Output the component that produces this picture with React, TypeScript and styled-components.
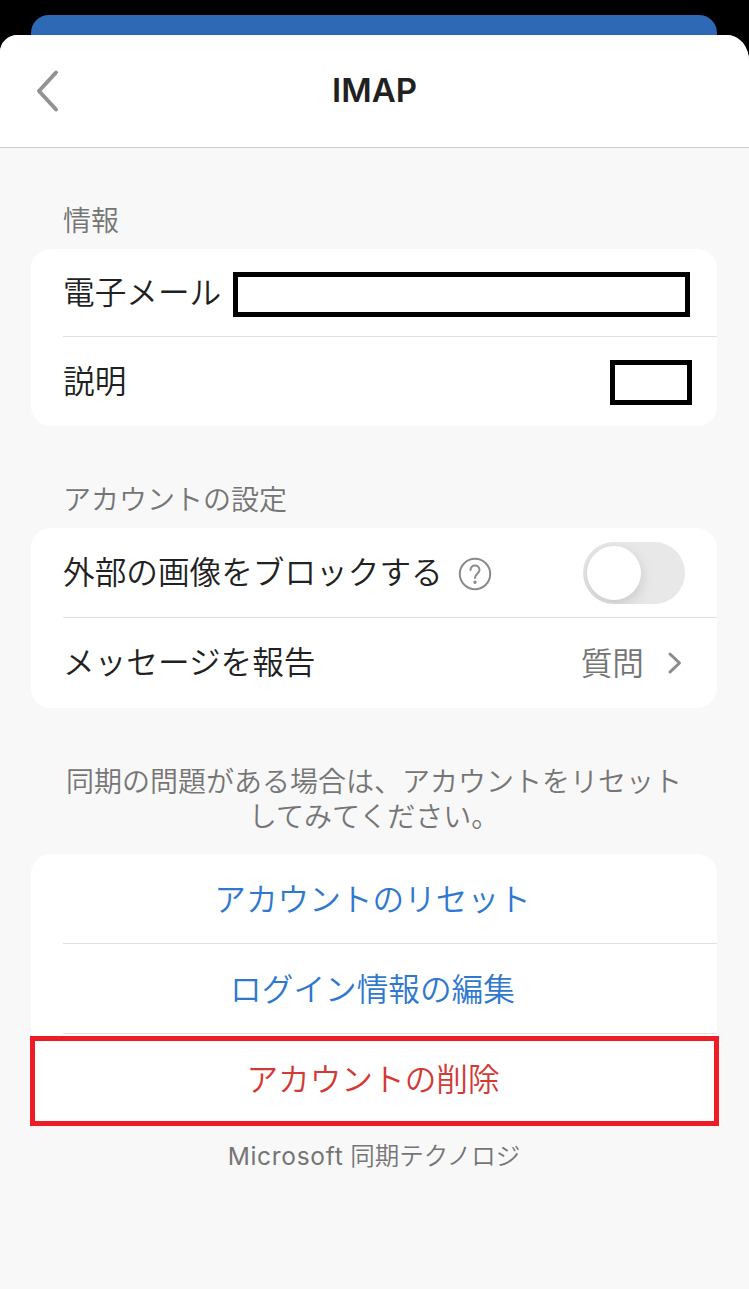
import React from 'react';
import styled, { createGlobalStyle } from 'styled-components';

const Global = createGlobalStyle`
  * { box-sizing: border-box; }
  body { margin: 0; background: #000; font-family: Inter, "Noto Sans CJK JP", sans-serif; font-weight: 400; color: #212121; }
`;
const Screen = styled.main`
  height: 1289px; width: 749px; background: #000; display: flex; flex-direction: column; padding-top: 15px; overflow: hidden;
`;
const BackSheet = styled.div`
  height: 20px; margin: 0 32px 0 31px; background: #2d69b5; border-radius: 18px 18px 0 0; flex: none;
`;
const Sheet = styled.section`
  flex: 1; background: #f8f8f8; border-radius: 18px 22px 0 0 / 17px 26px 0 0; overflow: hidden; display: flex; flex-direction: column;
`;
const Header = styled.header`
  height: 113px; flex: none; background: #fff; border-bottom: 1px solid #cbcbcb; display: grid; grid-template-columns: 96px 1fr 96px; align-items: center;
`;
const Back = styled.button`
  border: 0; background: none; padding: 0 0 0 36px; height: 44px; display: flex; color: #929292;
`;
const Title = styled.h1`
  margin: 0 0 2px; text-align: center; font-size: 33px; line-height: 40px; font-weight: 600;
`;
const Content = styled.div`
  padding: 0 32px 0 31px; display: flex; flex-direction: column;
`;
const SectionLabel = styled.h2<{ $top: number }>`
  margin: ${p => p.$top}px 0 0; padding-left: 32px; height: 40px; line-height: 40px; font-size: 28px; font-weight: 350; color: #757575;
`;
const Card = styled.div<{ $top: number; $open?: boolean }>`
  margin-top: ${p => p.$top}px; background: #fff; border-radius: ${p => p.$open ? '20px 20px 0 0' : '20px'};
  padding: 0 0 ${p => p.$open ? 2 : 0}px 32px;
`;
const Row = styled.div<{ $h: number; $line?: boolean }>`
  height: ${p => p.$h}px; display: flex; align-items: center; justify-content: space-between;
  padding-right: 32px; font-size: 31.65px; line-height: 46px; font-weight: 350; color: #212121;
  border-bottom: ${p => p.$line ? '1px solid #e0e0e0' : '0'}; white-space: nowrap;
`;
const ActionRow = styled(Row)`
  justify-content: center; padding: 2px 35px 0 0; color: #2e78cf;
`;
const Redacted = styled.div<{ $w: number; $r: number; $top: number }>`
  width: ${p => p.$w}px; height: 45px; border: 5px solid #000; background: #fff; margin: ${p => p.$top}px ${p => p.$r}px 0 0; flex: none;
`;
const WithHelp = styled.div`
  display: flex; align-items: center; gap: 15px;
  svg { margin-top: 2px; }
`;
const Toggle = styled.div`
  width: 102px; height: 62px; border-radius: 31px; background: #e8e8e8; padding: 4px; flex: none; overflow: hidden;
`;
const Knob = styled.div`
  width: 54px; height: 54px; border-radius: 50%; background: #fff; box-shadow: 0 5px 14px rgba(0,0,0,.14);
`;
const Value = styled.div`
  display: flex; align-items: center; gap: 23px; margin-right: 1px; padding-top: 1px; color: #757575;
  svg { margin: 0 1px 2px 0; }
`;
const Hint = styled.p`
  margin: 57px 0 0; text-align: center; font-size: 28px; line-height: 35px; font-weight: 350; color: #757575; white-space: nowrap;
`;
const DeleteRow = styled.div`
  margin: 0 -2px 0 -1px; height: 90px; border: 5px solid #ee1c25; background: #fff; display: flex; align-items: center; justify-content: center;
  padding: 0 3px 2px 0; font-size: 31.65px; line-height: 46px; font-weight: 350; color: #d33a35;
`;
const Footer = styled.footer`
  margin-top: 11px; text-align: center; font-size: 24.5px; line-height: 38px; font-weight: 350; color: #757575;
`;
const Brand = styled.span`
  letter-spacing: .7px; font-weight: 400;
`;

export default function App() {
  return (
    <Screen>
      <Global />
      <BackSheet />
      <Sheet>
        <Header>
          <Back aria-label="戻る">
            <svg width="24" height="44" viewBox="0 0 24 44" fill="none" stroke="currentColor" strokeWidth="4" strokeLinecap="round" strokeLinejoin="round"><path d="M20 3.500 3 22l17 18.500" /></svg>
          </Back>
          <Title>IMAP</Title>
        </Header>
        <Content>
          <SectionLabel $top={53}>情報</SectionLabel>
          <Card $top={8}>
            <Row $h={88} $line>電子メール<Redacted $w={457} $r={-5} $top={3} /></Row>
            <Row $h={89}>説明<Redacted $w={82} $r={-7} $top={2} /></Row>
          </Card>
          <SectionLabel $top={54}>アカウントの設定</SectionLabel>
          <Card $top={8}>
            <Row $h={90} $line>
              <WithHelp>外部の画像をブロックする
                <svg width="34" height="34" viewBox="0 0 34 34" fill="none" stroke="#8a8a8a" strokeWidth="2" strokeLinecap="round" strokeLinejoin="round"><circle cx="17" cy="17" r="15.200" /><path d="M12.500 13C12.500 7 21.500 7 21.500 13 21.500 16.500 17 16.700 17 21" /><circle cx="17" cy="25.300" r=".7" fill="#8a8a8a" /></svg>
              </WithHelp>
              <Toggle><Knob /></Toggle>
            </Row>
            <Row $h={90}>メッセージを報告
              <Value>質問<svg width="16" height="24" viewBox="0 0 16 24" fill="none" stroke="#8a8a8a" strokeWidth="3" strokeLinecap="round" strokeLinejoin="round"><path d="m3 3 9.500 9-9.500 9" /></svg></Value>
            </Row>
          </Card>
          <Hint>同期の問題がある場合は、アカウントをリセット<br />してみてください。</Hint>
          <Card $top={19} $open>
            <ActionRow $h={90} $line>アカウントのリセット</ActionRow>
            <ActionRow $h={90} $line>ログイン情報の編集</ActionRow>
          </Card>
          <DeleteRow>アカウントの削除</DeleteRow>
          <Footer><Brand>Microsoft</Brand> 同期テクノロジ</Footer>
        </Content>
      </Sheet>
    </Screen>
  );
}
